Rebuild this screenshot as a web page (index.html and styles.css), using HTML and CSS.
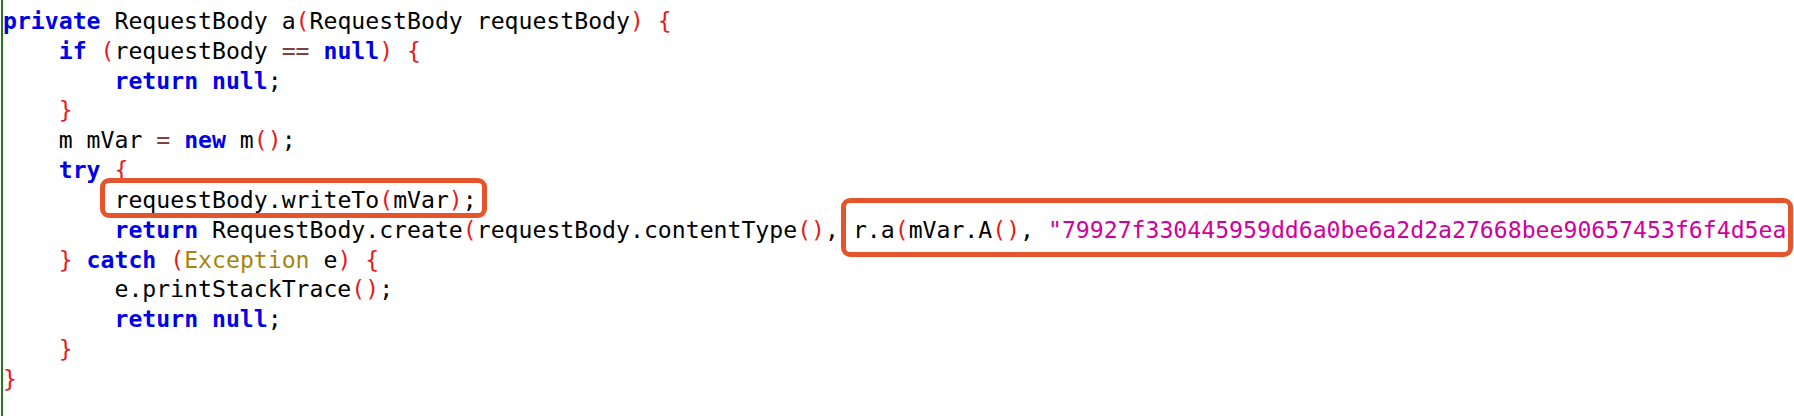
FILE: index.html
```html
<!DOCTYPE html>
<html>
<head>
<meta charset="utf-8">
<link rel="stylesheet" href="styles.css">
</head>
<body>
<div class="editor">
<div class="line"><span class="kw">private</span> RequestBody a<span class="sep">(</span>RequestBody requestBody<span class="sep">)</span> <span class="sep">{</span></div>
<div class="line">    <span class="kw">if</span> <span class="sep">(</span>requestBody <span class="op">==</span> <span class="kw">null</span><span class="sep">)</span> <span class="sep">{</span></div>
<div class="line">        <span class="kw">return</span> <span class="kw">null</span>;</div>
<div class="line">    <span class="sep">}</span></div>
<div class="line">    m mVar <span class="op">=</span> <span class="kw">new</span> m<span class="sep">(</span><span class="sep">)</span>;</div>
<div class="line">    <span class="kw">try</span> <span class="sep">{</span></div>
<div class="line">        <span class="mark mark-write">requestBody.writeTo<span class="sep">(</span>mVar<span class="sep">)</span>;</span></div>
<div class="line">        <span class="kw">return</span> RequestBody.create<span class="sep">(</span>requestBody.contentType<span class="sep">(</span><span class="sep">)</span>, <span class="mark mark-sign">r.a<span class="sep">(</span>mVar.A<span class="sep">(</span><span class="sep">)</span>, <span class="str">"79927f330445959dd6a0be6a2d2a27668bee90657453f6f4d5ea</span></span></div>
<div class="line">    <span class="sep">}</span> <span class="kw">catch</span> <span class="sep">(</span><span class="type">Exception</span> e<span class="sep">)</span> <span class="sep">{</span></div>
<div class="line">        e.printStackTrace<span class="sep">(</span><span class="sep">)</span>;</div>
<div class="line">        <span class="kw">return</span> <span class="kw">null</span>;</div>
<div class="line">    <span class="sep">}</span></div>
<div class="line"><span class="sep">}</span></div>
</div>
</body>
</html>
```

FILE: styles.css
```css
html, body {
  margin: 0;
  padding: 0;
  background: #ffffff;
  overflow: hidden;
}

.editor {
  margin-left: 1px;
  border-left: 2px solid #237a1e;
  height: 416px;
  box-sizing: border-box;
  padding-top: 7px;
  font-family: "DejaVu Sans Mono", "Liberation Mono", monospace;
  font-size: 23.15px;
  line-height: 29.83px;
  color: #000000;
}

.line {
  white-space: pre;
  height: 29.83px;
}

.kw {
  color: #0000e6;
  font-weight: bold;
}

.sep {
  color: #e51a1a;
}

.op {
  color: #804040;
}

.str {
  color: #d0009a;
}

.type {
  color: #a5850c;
}

.mark {
  border: 5px solid #e5552d;
  border-radius: 9px;
}

.mark-write {
  margin-left: -14px;
  padding: 4px 5px 0 9px;
  margin-right: -10px;
}

.mark-sign {
  margin-left: -12px;
  padding: 14px 2px 9px 7px;
  margin-right: -7px;
}
```
